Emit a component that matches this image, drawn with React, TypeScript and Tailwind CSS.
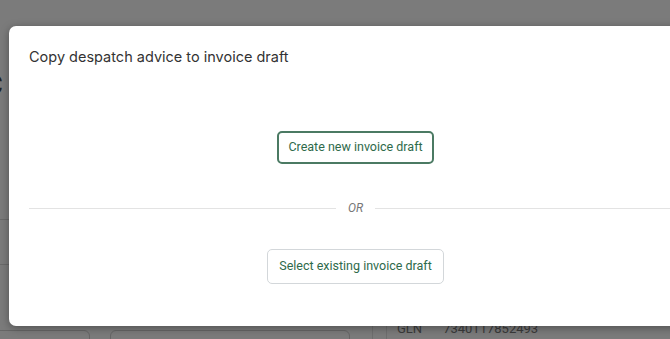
export default function App() {
  return (
    <div className="relative w-[670px] h-[339px] overflow-hidden bg-[#7b7b7b] font-['Roboto',sans-serif]">
      {/* page behind the overlay */}
      <div className="absolute left-[-14px] top-[66px] text-[26px] text-[#222]">C</div>
      <div className="absolute left-0 top-[219px] w-[9px] h-px bg-[#6a6a6a]" />
      <div className="absolute left-0 top-[264px] w-[9px] h-px bg-[#6a6a6a]" />
      <div className="absolute left-[-10px] top-[330px] w-[100px] h-[20px] rounded-md border border-[#666]" />
      <div className="absolute left-[110px] top-[330px] w-[240px] h-[20px] rounded-md border border-[#666]" />
      <div className="absolute left-[372px] top-[326px] w-px h-[13px] bg-[#6e6e6e]" />
      <div className="absolute left-[386px] top-[326px] w-px h-[13px] bg-[#6e6e6e]" />
      <div className="absolute left-[397px] top-[319px] flex gap-[21px] text-[13px] text-[#3a3a3a]">
        <span>GLN</span>
        <span>7340117852493</span>
      </div>

      {/* dialog */}
      <div className="absolute left-[9px] top-[26px] w-[693px] h-[300px] rounded-[7px] bg-white shadow-[0_2px_8px_rgba(0,0,0,0.35)] flex flex-col">
        <h2 className="pl-5 pt-[21px] text-[14.5px] leading-5 text-[#333] font-['Inter',sans-serif]">
          Copy despatch advice to invoice draft
        </h2>
        <div className="flex flex-col items-center pt-[64px]">
          <button className="h-[33px] px-[9px] rounded-[5px] border-2 border-[#4b7a63] text-[12.5px] text-[#2e6a4b] bg-white">
            Create new invoice draft
          </button>
        </div>
        <div className="flex items-center gap-3 px-5 mt-[38px]">
          <div className="flex-1 h-px bg-[#e3e3e3]" />
          <span className="italic text-[12px] text-[#777] leading-none">OR</span>
          <div className="flex-1 h-px bg-[#e3e3e3]" />
        </div>
        <div className="flex flex-col items-center mt-[35px]">
          <button className="h-[35px] px-[11px] rounded-[5px] border border-[#d3d7da] text-[12.5px] text-[#2e6a4b] bg-white">
            Select existing invoice draft
          </button>
        </div>
      </div>
    </div>
  );
}
